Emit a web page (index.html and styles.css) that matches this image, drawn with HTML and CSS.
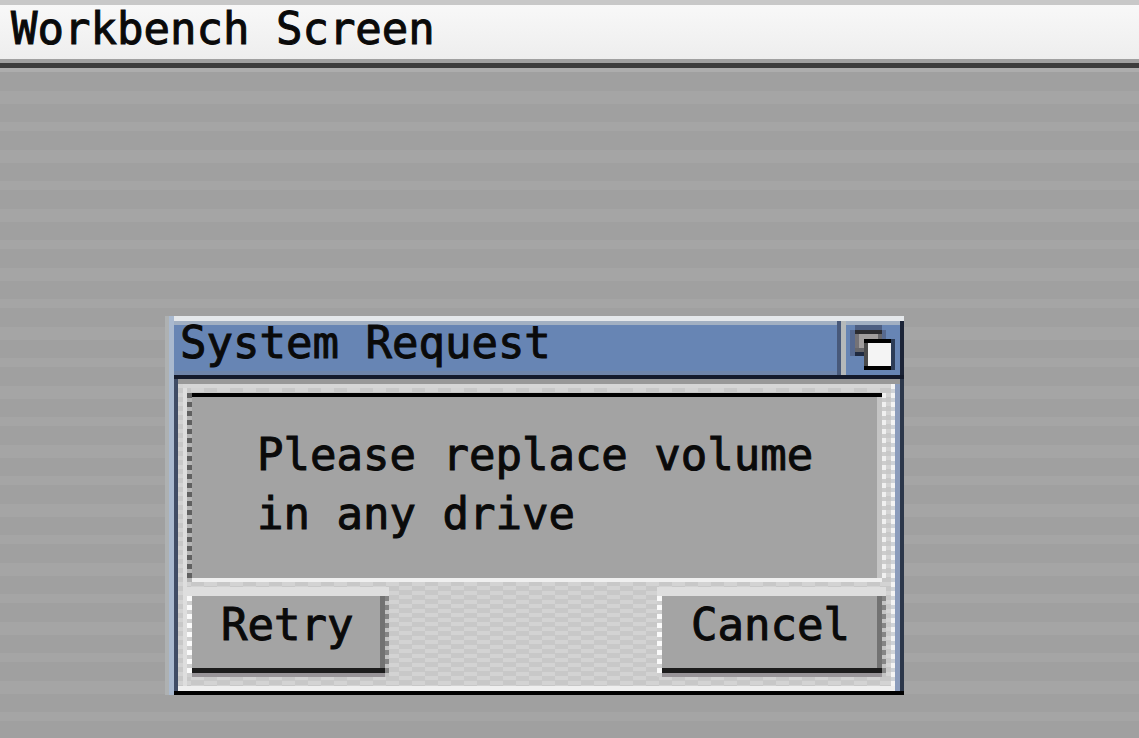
FILE: index.html
```html
<!doctype html>
<html lang="en">
    <head>
        <meta charset="utf-8">
        <title>Workbench Screen</title>
        <link rel="stylesheet" href="styles.css">
    </head>
    <body>
        <header class="menubar">
            <h1 class="menubar_title">Workbench Screen</h1>
        </header>
        <main class="desktop">
            <section class="window" role="dialog" aria-labelledby="window_title">
                <div class="titlebar">
                    <h2 class="titlebar_text" id="window_title">System Request</h2>
                    <button class="depth_button" type="button" aria-label="Window depth">
                        <svg class="depth_icon" viewBox="0 0 54 50" shape-rendering="crispEdges">
                            <path fill="#4d5f82" d="M9 0H36V5H9z"/>
                            <path fill="#56698f" d="M4 5H9V31H4zM36 5H40V14H36z"/>
                            <path fill="#1f2a40" d="M9 27H18V31H9z"/>
                            <path fill="#2b2b2f" d="M9 5H36V9H9z"/>
                            <path fill="#747276" d="M9 9H13V27H9z"/>
                            <path fill="#a09d9d" d="M13 9H32V27H13z"/>
                            <path fill="#66666a" d="M32 9H36V14H32zM9 23H18V27H9z"/>
                            <path fill="#000" d="M18 14H45V18H18zM18 41H45V45H18z"/>
                            <path fill="#4b4b4b" d="M18 18H22V41H18z"/>
                            <path fill="#f4f4f4" d="M22 18H45V41H22z"/>
                            <path fill="#2c3c57" d="M45 14H49V45H45z"/>
                        </svg>
                    </button>
                </div>
                <div class="content">
                    <p class="message">Please replace volume<br>in any drive</p>
                    <div class="buttons">
                        <button class="button" type="button">Retry</button>
                        <button class="button" type="button">Cancel</button>
                    </div>
                </div>
            </section>
        </main>
    </body>
</html>
```

FILE: styles.css
```css
* {
    box-sizing:border-box;
}

html {
    height:100%;
}

body {
    display:flex;
    flex-direction:column;
    min-height:100%;
    margin:0;
    overflow:hidden;
    color:#0a0a0a;
    background-color:#a0a0a0;
    font-family:"DejaVu Sans Mono", "Liberation Mono", monospace;
    font-size:44px;
    line-height:52px;
    -webkit-text-stroke:1px currentColor;
}

h1, h2, p {
    margin:0;
    font-size:44px;
    font-weight:normal;
}

button {
    padding:0;
    border:0;
    color:inherit;
    font:inherit;
}

.menubar {
    padding:0 11px 11px;
    border-top:5px solid #c8c8c8;
    border-bottom:5px solid #3c3c3c;
    background:linear-gradient(#f8f8f8, #ededed);
    box-shadow:inset 0 -4px #a0a0a0;
}

.menubar_title {
    line-height:47px;
}

.desktop {
    position:relative;
    flex:1;
    border-top:4px solid #adadad;
    background:repeating-linear-gradient(#a0a0a0 0 19px, #a5a5a5 19px 32px, #a0a0a0 32px 50px, #a5a5a5 50px 59px);
}

.window {
    position:absolute;
    top:244px;
    left:174px;
    width:730px;
    border-bottom:4px solid #000000;
    box-shadow:-5px 0 #a9b9cf, -9px 0 #aeb1b2;
}

.titlebar {
    display:flex;
    height:63px;
    border-top:5px solid #e5e8eb;
    border-bottom:4px solid #141a2b;
    background:linear-gradient(#a2b0c2 4px, #6785b4 4px 50px, #6e84a9 50px);
}

.titlebar_text {
    flex:1;
    padding-left:6px;
    line-height:44px;
}

.depth_button {
    width:67px;
    padding:4px 0 0 5px;
    border-left:4px solid #48597a;
    border-right:4px solid #1c2437;
    background-color:#6785b4;
    box-shadow:inset 5px 0 #b5b9ba, inset 0 4px #a2b0c2;
}

.depth_icon {
    display:block;
    width:54px;
    height:50px;
}

/* dithered frame, with the dotted bevel down both sides */
.content {
    padding:14px 14px 14px 9px;
    border-left:4px solid #3f4c65;
    border-right:4px solid #2c374a;
    background:
        linear-gradient(#d6d6d6, #d6d6d6) 5px 5px / calc(100% - 15px) 4px no-repeat,
        linear-gradient(#dedede, #dedede) 5px 5px / 4px 100% no-repeat,
        repeating-linear-gradient(#606060 0 5px, #b5b5b5 5px 9px) 9px 14px / 5px 189px no-repeat,
        repeating-linear-gradient(#f4f4f4 0 5px, #cfd3d8 5px 9px) right 5px top 5px / 4px 100% no-repeat,
        repeating-linear-gradient(#f0f0f0 0 5px, #cccccc 5px 9px) right 14px top 14px / 4px 185px no-repeat,
        repeating-conic-gradient(#d3d3d3 0 25%, #c8c8c8 0 50%) 0 0 / 26px 9px;
    box-shadow:inset 0 5px #989898, inset -5px 0 #8b9cbc, inset 0 -5px #efefef;
}

.message {
    margin:0 4px 0 5px;
    padding:28px 60px 35px 65px;
    border-top:4px solid #000000;
    border-bottom:4px solid #efefef;
    line-height:59px;
    background:linear-gradient(#c4c4c4, #c4c4c4) right / 5px 100% no-repeat #a3a3a3;
}

.buttons {
    display:flex;
    justify-content:space-between;
    margin-top:5px;
}

.button {
    height:90px;
    padding:0 36px 14px 34px;
    background:
        linear-gradient(#dedede, #dedede) 0 0 / 100% 9px no-repeat,
        linear-gradient(#989498, #989498) 5px 100% / calc(100% - 9px) 4px no-repeat,
        linear-gradient(#1c1c1c, #1c1c1c) 5px calc(100% - 4px) / calc(100% - 9px) 5px no-repeat,
        linear-gradient(#727272, #727272) calc(100% - 4px) 0 / 5px 100% no-repeat,
        repeating-linear-gradient(#fafafa 0 5px, #cfcfcf 5px 9px) 0 0 / 5px 100% no-repeat,
        repeating-linear-gradient(#858585 0 5px, #c4c4c4 5px 9px) 100% 0 / 4px 100% no-repeat,
        #a4a4a4;
}
```
